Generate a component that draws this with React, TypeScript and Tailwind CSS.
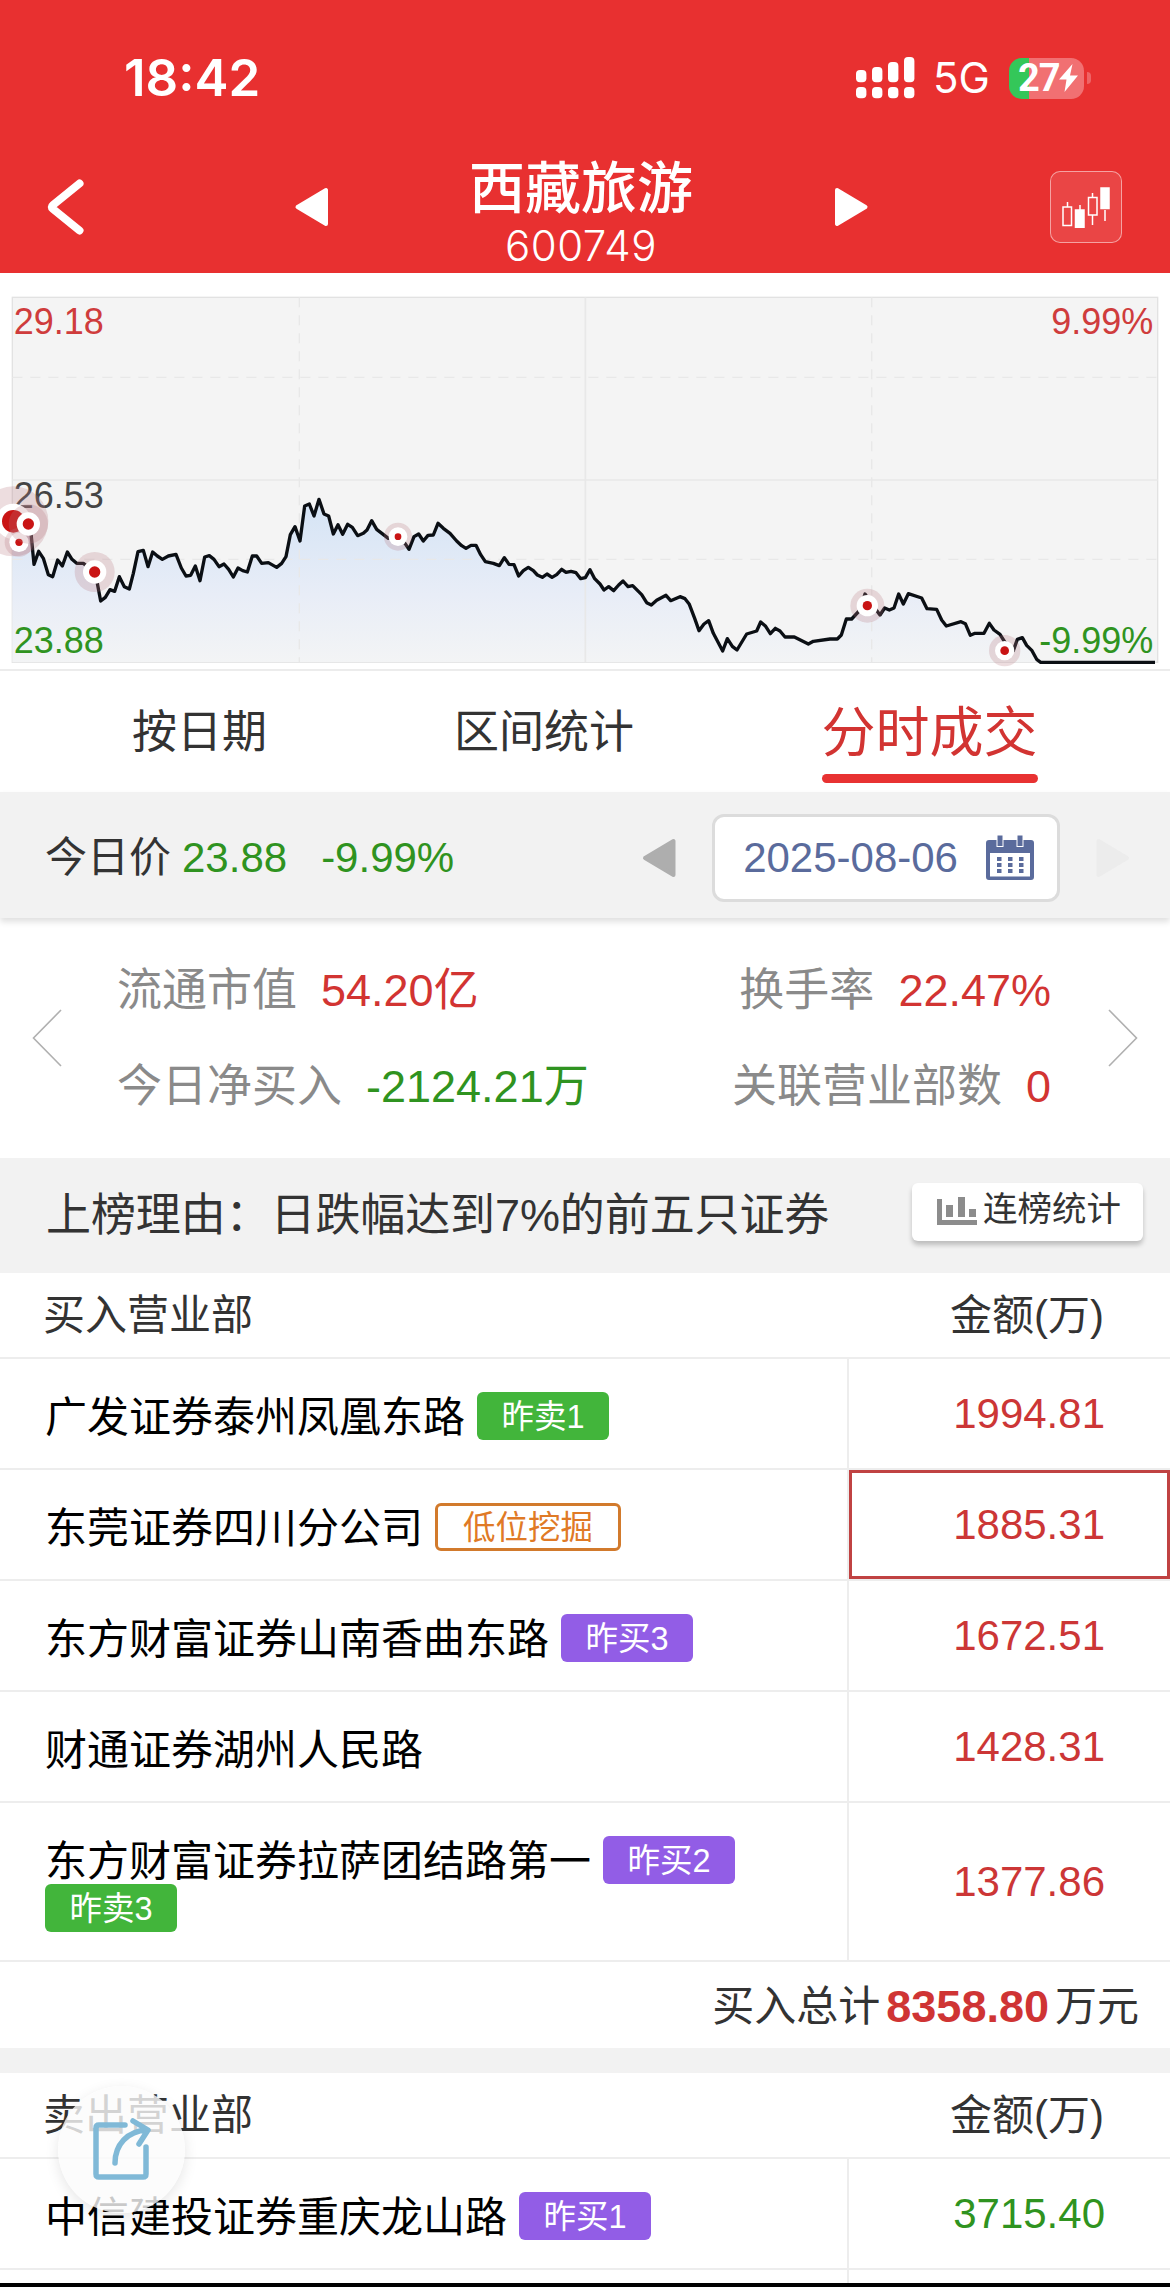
import clsx from 'clsx'

type Tag = { label: string; kind: 'buy' | 'sell' | 'style' }
type Seat = { name: string; amount: string; tags: Tag[]; selected?: boolean }

const BUY_SEATS: Seat[] = [
  { name: '广发证券泰州凤凰东路', amount: '1994.81', tags: [{ label: '昨卖1', kind: 'sell' }] },
  {
    name: '东莞证券四川分公司',
    amount: '1885.31',
    tags: [{ label: '低位挖掘', kind: 'style' }],
    selected: true,
  },
  { name: '东方财富证券山南香曲东路', amount: '1672.51', tags: [{ label: '昨买3', kind: 'buy' }] },
  { name: '财通证券湖州人民路', amount: '1428.31', tags: [] },
  {
    name: '东方财富证券拉萨团结路第一',
    amount: '1377.86',
    tags: [
      { label: '昨买2', kind: 'buy' },
      { label: '昨卖3', kind: 'sell' },
    ],
  },
]

const SELL_SEATS: Seat[] = [
  { name: '中信建投证券重庆龙山路', amount: '3715.40', tags: [{ label: '昨买1', kind: 'buy' }] },
]

// Intraday price line, in chart units (3 units = 1px)
const PRICE_LINE =
  '40,724 85,732 93,760 102,853 116,814 130,835 145,884 158,890 173,840 187,858 202,816 216,838 230,850 250,850 284,876 292,910 302,963 316,952 330,929 344,934 358,890 373,920 388,927 400,880 414,815 430,811 444,860 458,816 472,828 487,838 505,828 528,823 544,864 558,888 572,886 586,858 600,902 614,831 628,827 642,838 657,860 672,852 686,868 700,891 714,864 728,872 742,876 757,828 770,828 785,850 805,848 830,862 845,850 858,830 871,764 885,740 900,783 914,678 928,672 942,708 957,658 972,702 986,708 1000,762 1014,734 1028,763 1043,733 1057,742 1073,767 1090,760 1101,750 1115,722 1130,748 1165,775 1194,770 1215,790 1227,808 1242,770 1256,762 1270,783 1284,766 1300,765 1314,730 1330,745 1350,760 1370,783 1385,797 1398,805 1413,796 1428,796 1442,824 1456,845 1480,850 1498,857 1513,833 1527,853 1542,854 1556,888 1570,872 1585,862 1600,872 1612,885 1627,892 1641,882 1656,892 1670,884 1685,868 1698,877 1713,874 1728,878 1742,896 1756,893 1770,869 1784,896 1800,912 1812,930 1826,920 1841,932 1856,915 1869,903 1884,920 1898,917 1925,944 1940,968 1954,975 1970,961 1998,946 2012,962 2026,956 2040,950 2055,956 2068,973 2084,1015 2097,1052 2112,1032 2126,1022 2140,1060 2168,1113 2182,1076 2197,1099 2211,1110 2240,1062 2270,1053 2282,1026 2297,1039 2311,1061 2326,1045 2340,1053 2355,1071 2383,1071 2425,1092 2440,1084 2490,1077 2512,1077 2524,1065 2539,1017 2555,1017 2580,990 2595,942 2625,985 2640,1005 2654,984 2668,990 2682,984 2696,942 2710,972 2725,941 2765,954 2781,986 2810,988 2825,1020 2839,1038 2883,1025 2896,1031 2911,1066 2925,1060 2952,1060 2968,1030 2982,1050 3000,1063 3020,1095 3040,1112 3052,1078 3067,1073 3080,1096 3096,1112 3110,1138 3122,1147 3465,1147'

const MARKERS = [
  { x: 40, y: 724, halo: 105, ring: 53, dot: 34 },
  { x: 57, y: 787, halo: 43, ring: 29, dot: 11 },
  { x: 85, y: 732, halo: 59, ring: 35, dot: 17 },
  { x: 284, y: 876, halo: 60, ring: 35, dot: 17 },
  { x: 1194, y: 770, halo: 42, ring: 28, dot: 10 },
  { x: 2602, y: 977, halo: 51, ring: 32, dot: 14 },
  { x: 3014, y: 1112, halo: 47, ring: 29, dot: 13 },
]

const StatusBar = () => (
  <div className="flex h-[156px] items-start justify-between pt-[46px] pr-[79px] pl-[124px] font-['Inter',sans-serif]">
    <span className="text-[51px] leading-[64px] font-semibold">18:42</span>
    <div className="flex items-center pt-[11px]">
      <svg width="60" height="42" viewBox="0 0 60 42" fill="currentColor">
        {[13, 10, 5, 0].map((top, i) => (
          <g key={top}>
            <rect x={i * 16} y={top} width="10.4" height={25.3 - top} rx="4" />
            <rect x={i * 16} y="30" width="10.4" height="11.3" rx="4" />
          </g>
        ))}
      </svg>
      <span className="ml-[17px] w-[76px] text-[42px] leading-[42px]">5G</span>
      <div className="flex h-[41px] w-[75px] items-center rounded-[13px] bg-[linear-gradient(90deg,#34c759_27%,#f17072_27%)] pl-[9px]">
        <span className="w-[41px] font-['Roboto',sans-serif] text-[38px] leading-[41px] font-bold tracking-[-1px]">
          27
        </span>
        <svg width="19" height="28" viewBox="0 0 19 28" fill="currentColor">
          <path d="M13.500 0 0 15.500h7.500L5.500 28 19 11.500h-8z" />
        </svg>
      </div>
      <span className="ml-[3px] h-[12px] w-[4px] rounded-r-full bg-[#ee6466]" />
    </div>
  </div>
)

const Triangle = ({ flip, className }: { flip?: boolean; className?: string }) => (
  <svg
    viewBox="0 0 34 40"
    fill="currentColor"
    stroke="currentColor"
    strokeWidth="4"
    strokeLinejoin="round"
    className={clsx(flip && 'rotate-180', className)}
  >
    <path d="M31.500 3v34L3 20z" />
  </svg>
)

const TitleBar = () => (
  <div className="flex h-[116px] items-start">
    <svg width="38" height="56" viewBox="0 0 38 56" fill="none" className="mt-[23px] ml-[47px]">
      <path
        d="M32.500 4.500 6 26q-2.500 2 0 4l26.500 21.500"
        stroke="currentColor"
        strokeWidth="8"
        strokeLinecap="round"
        strokeLinejoin="round"
      />
    </svg>
    <Triangle className="mt-[31px] ml-[209px] h-[40px] w-[35px]" />
    <div className="ml-[139px] w-[226px] text-center">
      <div className="text-[56px] leading-[66px] font-medium whitespace-nowrap">西藏旅游</div>
      <div className="font-['Inter',sans-serif] text-[42px] leading-[48px] font-light tracking-[0.5px]">
        600749
      </div>
    </div>
    <Triangle flip className="mt-[31px] ml-[140px] h-[40px] w-[35px]" />
    <div className="mt-[15px] ml-[181px] flex h-[72px] w-[72px] items-center justify-center rounded-[10px] border border-white/50 bg-white/10">
      <svg width="48" height="42" viewBox="0 0 48 42" stroke="currentColor" strokeWidth="1.5">
        <path d="M5.500 16v5M43 24v11M18 19v5M30.500 7v5M30.500 29v10" />
        <path d="M1 21h8.500v18.500H1zM26.500 11.500H35V29h-8.500z" fill="none" />
        <path d="M13.500 24h8.500v17.500h-8.500zM39 2h8v20.500h-8z" fill="currentColor" />
      </svg>
    </div>
  </div>
)

const PriceChart = () => (
  <svg
    width="1170"
    height="396"
    viewBox="0 -21 3510 1188"
    className="block font-['Liberation_Sans',Arial,sans-serif]"
  >
    <defs>
      <linearGradient id="area" gradientUnits="userSpaceOnUse" x1="0" y1="640" x2="0" y2="1147">
        <stop offset="0" stopColor="#d3e3f5" />
        <stop offset="0.6" stopColor="#e8edf7" />
        <stop offset="1" stopColor="#f3f4f5" />
      </linearGradient>
    </defs>
    <rect x="37" y="52" width="3436" height="1095" fill="#f4f4f4" stroke="#e2e2e2" strokeWidth="4" />
    <polygon points={`37,724 ${PRICE_LINE} 37,1147`} fill="url(#area)" />
    <g stroke="#e8e8e8" strokeWidth="5">
      <path d="M37 600h3436M1756 52v1095" />
      <path d="M37 292h3436M37 838h3436M898 52v1095M2615 52v1095" strokeDasharray="30 24" strokeWidth="4" />
    </g>
    <g fontSize="108">
      <text x="41" y="161" fill="#cf3c3c">29.18</text>
      <text x="41" y="684" fill="#444">26.53</text>
      <text x="41" y="1118" fill="#2f9320">23.88</text>
      <text x="3460" y="161" fill="#cf3c3c" textAnchor="end">9.99%</text>
      <text x="3460" y="1118" fill="#2f9320" textAnchor="end">-9.99%</text>
    </g>
    <polyline points={PRICE_LINE} fill="none" stroke="#0b0f14" strokeWidth="10" strokeLinejoin="round" />
    {MARKERS.map((m) => (
      <g key={m.x}>
        <circle cx={m.x} cy={m.y} r={m.halo} fill="#b87880" fillOpacity="0.25" />
        <circle cx={m.x} cy={m.y} r={m.ring} fill="#fff" />
        <circle cx={m.x} cy={m.y} r={m.dot} fill="#c91414" />
      </g>
    ))}
  </svg>
)

const Tabs = () => (
  <div className="flex h-[123px] border-t-2 border-[#ececec] text-[45px] leading-[124px] whitespace-nowrap text-[#333]">
    <div className="w-[399px] text-center">按日期</div>
    <div className="w-[290px] text-center">区间统计</div>
    <div className="flex w-[481px] flex-col items-center">
      <span className="h-[103px] text-[54px] text-[#d23432]">分时成交</span>
      <span className="h-[9px] w-[216px] rounded-full bg-[#e83232]" />
    </div>
  </div>
)

const CalendarIcon = () => (
  <svg width="48" height="46" viewBox="0 0 48 46" fill="#5a6b9c">
    <path
      fillRule="evenodd"
      d="M3 5h42a3 3 0 0 1 3 3v34a3 3 0 0 1-3 3H3a3 3 0 0 1-3-3V8a3 3 0 0 1 3-3zm1 13v23.500h40V18z"
    />
    {[11, 31].map((x) => (
      <rect key={x} x={x} y="0" width="6" height="11.500" stroke="#fff" strokeWidth="1" />
    ))}
    {[22, 28, 34].map((y) =>
      [11, 22, 33].map((x) => <rect key={`${x}-${y}`} x={x} y={y} width="4.500" height="4" />)
    )}
  </svg>
)

const DateBar = () => (
  <div className="relative flex h-[126px] items-center bg-[#f2f2f2] pt-[5px] pl-[45px] text-[42px] shadow-[0_4px_6px_rgba(0,0,0,0.12)]">
    <span className="text-[#333]">今日价</span>
    <span className="ml-[11px] text-[#2f9320]">23.88</span>
    <span className="ml-[34px] w-[321px] text-[#2f9320]">-9.99%</span>
    <Triangle className="h-[42px] w-[34px] text-[#aeaeae]" />
    <div className="ml-[36px] flex h-[88px] w-[348px] items-center justify-between rounded-[12px] border-3 border-[#dcdcdc] bg-white pr-[23px] pl-[28px] text-[#5a6b9c]">
      2025-08-06
      <CalendarIcon />
    </div>
    <Triangle flip className="ml-[36px] h-[42px] w-[34px] text-[#ececec]" />
  </div>
)

const Chevron = ({ flip }: { flip?: boolean }) => (
  <svg width="30" height="58" viewBox="0 0 30 58" fill="none" className={clsx(flip && 'rotate-180')}>
    <path d="M29 1 1.500 29 29 57" stroke="#b0b0b0" strokeWidth="1.600" />
  </svg>
)

const Stat = ({ label, value, down }: { label: string; value: string; down?: boolean }) => (
  <div className="flex gap-[24px]">
    <span className="text-[#8a8a8a]">{label}</span>
    <span className={down ? 'text-[#2f9320]' : 'text-[#d23432]'}>{value}</span>
  </div>
)

const Stats = () => (
  <div className="flex h-[240px] items-start bg-white px-[32px] text-[45px] leading-[96px] whitespace-nowrap">
    <div className="pt-[91px]">
      <Chevron />
    </div>
    <div className="flex flex-1 justify-between pt-[25px] pr-[57px] pl-[55px]">
      <div>
        <Stat label="流通市值" value="54.20亿" />
        <Stat label="今日净买入" value="-2124.21万" down />
      </div>
      <div className="flex flex-col items-end">
        <Stat label="换手率" value="22.47%" />
        <Stat label="关联营业部数" value="0" />
      </div>
    </div>
    <div className="pt-[91px]">
      <Chevron flip />
    </div>
  </div>
)

const ReasonBar = () => (
  <div className="flex h-[115px] items-center justify-between bg-[#f2f2f2] pr-[27px] pl-[46px] text-[45px] whitespace-nowrap text-[#333]">
    <span className="tracking-[-0.1px]">上榜理由：日跌幅达到7%的前五只证券</span>
    <div className="mb-[8px] flex h-[58px] w-[231px] items-center rounded-[6px] bg-white pl-[25px] text-[34.5px] leading-[54px] shadow-[0_4px_5px_rgba(0,0,0,0.22)]">
      <svg width="40" height="28" viewBox="0 0 40 28" fill="#8c8c8c" className="-mt-[2px]">
        <path d="M0 2h5v21h35v5H0zM9 8h7v12H9zM21 0h7v20h-7zM32 12h7v8h-7z" />
      </svg>
      <span className="mb-[5px] ml-[6px]">连榜统计</span>
    </div>
  </div>
)

const TableHead = ({ title }: { title: string }) => (
  <div className="flex h-[86px] items-center justify-between border-b-2 border-[#ededed] pr-[66px] pl-[43px] text-[42px] text-[#333]">
    <span>{title}</span>
    <span>金额(万)</span>
  </div>
)

const TagBadge = ({ label, kind }: Tag) => (
  <span
    className={clsx(
      'inline-flex h-[48px] items-center justify-center rounded-[6px] text-[32.5px] leading-[48px]',
      kind === 'buy' && 'w-[132px] bg-[#925de6] text-white',
      kind === 'sell' && 'w-[132px] bg-[#42b53b] text-white',
      kind === 'style' && 'w-[186px] border-3 border-[#d27a2c] text-[#e07a26]'
    )}
  >
    <span className="pt-[2px]">{label}</span>
  </span>
)

const SeatRow = ({ seat, down }: { seat: Seat; down?: boolean }) => (
  <div className="flex border-b-2 border-[#ededed] text-[42px]">
    <div className="flex w-[847px] flex-wrap items-center gap-x-[12px] pt-[33px] pr-[90px] pb-[28px] pl-[45px] leading-[48px] text-black">
      <span className="h-[48px] pt-[2px]">{seat.name}</span>
      {seat.tags.map((tag) => (
        <TagBadge key={tag.label} {...tag} />
      ))}
    </div>
    <div
      className={clsx(
        'flex flex-1 items-center justify-end border-l-2 border-[#ededed]',
        down ? 'text-[#2f9320]' : 'text-[#cc3636]'
      )}
    >
      <div
        className={clsx(
          'flex h-full w-full items-center justify-end leading-none',
          seat.selected ? 'border-3 border-[#c04242] pr-[62px]' : 'pr-[65px]'
        )}
      >
        {seat.amount}
      </div>
    </div>
  </div>
)

const BuyTotal = () => (
  <div className="flex h-[86px] items-center justify-end pt-[3px] pr-[31px] text-[42px] text-[#333]">
    买入总计
    <span className="mx-[6px] text-[45px] font-bold text-[#cf3434]">8358.80</span>
    万元
  </div>
)

const ShareButton = () => (
  <button className="absolute top-[2086px] left-[58px] flex size-[127px] items-center justify-center rounded-full bg-[#fbfbfb]/80 shadow-[0_4px_14px_rgba(0,0,0,0.1)]">
    <svg
      width="62"
      height="66"
      viewBox="0 0 62 66"
      fill="none"
      stroke="#80b9d7"
      strokeWidth="5.500"
      strokeLinecap="round"
      strokeLinejoin="round"
    >
      <path d="M34 8H8q-3 0-3 3v46q0 3 3 3h44q3 0 3-3V30" />
      <path d="M24 46C24 28 36 14 56 13M42 4l15 9-9 14" />
    </svg>
  </button>
)

const App = () => {
  return (
    <div className="relative h-[2287px] w-[1170px] overflow-hidden bg-white font-['Liberation_Sans','Noto_Sans_CJK_SC',sans-serif]">
      <header className="h-[273px] bg-[#e83030] text-white">
        <StatusBar />
        <TitleBar />
      </header>
      <PriceChart />
      <Tabs />
      <DateBar />
      <Stats />
      <ReasonBar />
      <TableHead title="买入营业部" />
      {BUY_SEATS.map((seat) => (
        <SeatRow key={seat.name} seat={seat} />
      ))}
      <BuyTotal />
      <div className="h-[25px] bg-[#f2f2f2]" />
      <TableHead title="卖出营业部" />
      {SELL_SEATS.map((seat) => (
        <SeatRow key={seat.name} seat={seat} down />
      ))}
      <div className="flex h-[13px]">
        <div className="w-[849px] border-r-2 border-[#ededed]" />
      </div>
      <div className="h-[4px] bg-black" />
      <ShareButton />
    </div>
  )
}

export default App
